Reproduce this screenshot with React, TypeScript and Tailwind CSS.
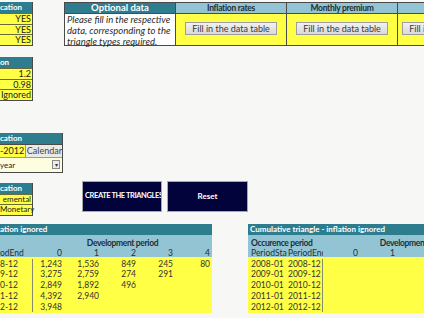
const font = { fontFamily: "Lato, 'Liberation Sans', sans-serif" };

function FillButton({ label }: { label: string }) {
  return (
    <div className="h-[13px] w-[92px] shrink-0 border border-[#9d9d9d] bg-gradient-to-b from-[#f1f1f1] to-[#d9d9d9] text-center text-[9px] leading-[11px] text-[#3a3a3a] whitespace-nowrap">
      {label}
    </div>
  );
}

function SmallBlock({
  title,
  rows,
  size = "text-[9px]",
}: {
  title: string;
  rows: string[];
  size?: string;
}) {
  return (
    <div className="w-[33px] shrink-0 border-r border-b border-[#4a4a4a]">
      <div className="h-[11px] bg-[#2e7d8f] text-[8px] font-bold leading-[11px] text-white whitespace-nowrap overflow-hidden">
        {title}
      </div>
      {rows.map((r) => (
        <div
          key={r}
          className={`h-[10.5px] border-t border-[#6b6b3a] bg-[#ffff45] ${size} leading-[9px] text-[#222] text-right whitespace-nowrap pr-[1px]`}
        >
          {r}
        </div>
      ))}
    </div>
  );
}

const leftRows = [
  { end: "8-12", v: ["1,243", "1,536", "849", "245", "80"] },
  { end: "9-12", v: ["3,275", "2,759", "274", "291", ""] },
  { end: "0-12", v: ["2,849", "1,892", "496", "", ""] },
  { end: "1-12", v: ["4,392", "2,940", "", "", ""] },
  { end: "2-12", v: ["3,948", "", "", "", ""] },
];

const rightRows = ["2008", "2009", "2010", "2011", "2012"];

export default function App() {
  return (
    <div
      className="h-[318px] w-[424px] overflow-hidden bg-[#f7f7f6] text-[#222]"
      style={font}
    >
      {/* top strip */}
      <div className="flex items-start pt-[2px]">
        <SmallBlock title="cation" rows={["YES", "YES", "YES"]} />

        <div className="ml-[31px] flex shrink-0">
          <div className="w-[112px] shrink-0 border border-[#4a4a4a] bg-white">
            <div className="h-[10px] bg-[#2e7d8f] text-center text-[9.5px] font-bold leading-[10px] text-white">
              Optional data
            </div>
            <div className="h-[32px] border-t border-[#4a4a4a] px-[2px] text-[9.5px] italic leading-[11px] text-[#2a2a2a]">
              <div className="whitespace-nowrap">Please fill in the respective</div>
              <div className="whitespace-nowrap">data, corresponding to the</div>
              <div className="whitespace-nowrap">triangle types required.</div>
            </div>
          </div>

          <div className="w-[111px] shrink-0 border-y border-r border-[#4a4a4a]">
            <div className="h-[10px] bg-[#92c4d4] text-center text-[8.5px] font-bold leading-[10px] tracking-[-0.3px] text-[#1d2f36]">
              Inflation rates
            </div>
            <div className="flex h-[32px] justify-center border-t border-[#4a4a4a] bg-[#ffff45] pt-[8px]">
              <FillButton label="Fill in the data table" />
            </div>
          </div>

          <div className="w-[111px] shrink-0 border-y border-r border-[#4a4a4a]">
            <div className="h-[10px] bg-[#92c4d4] text-center text-[8.5px] font-bold leading-[10px] tracking-[-0.3px] text-[#1d2f36]">
              Monthly premium
            </div>
            <div className="flex h-[32px] justify-center border-t border-[#4a4a4a] bg-[#ffff45] pt-[8px]">
              <FillButton label="Fill in the data table" />
            </div>
          </div>

          <div className="w-[40px] shrink-0 overflow-hidden border-y border-[#4a4a4a]">
            <div className="h-[10px] bg-[#92c4d4]" />
            <div className="flex h-[32px] border-t border-[#4a4a4a] bg-[#ffff45] pl-[4px] pt-[8px]">
              <FillButton label="Fill in the data table" />
            </div>
          </div>
        </div>
      </div>

      {/* second block */}
      <div className="mt-[11px]">
        <SmallBlock title="on" rows={["1.2", "0.98", "Ignored"]} />
      </div>

      {/* date block */}
      <div className="mt-[32px] w-[63px] border-r border-b border-[#4a4a4a]">
        <div className="h-[11px] bg-[#2e7d8f] text-[8px] font-bold leading-[11px] text-white">
          cation
        </div>
        <div className="flex h-[13px] border-t border-[#4a4a4a]">
          <div className="w-[27px] bg-[#ffff45] text-[9px] leading-[12px]">-2012</div>
          <div className="flex-1 border-l border-[#9a9a9a] bg-[#e9e9e6] pl-[1px] text-[9px] leading-[12px] text-[#444]">
            Calendar
          </div>
        </div>
        <div className="flex h-[15px] items-center justify-between border-t border-[#9a9a9a] bg-[#fdfde0] pr-[2px]">
          <span className="text-[8px] leading-[14px]">year</span>
          <div className="flex h-[9px] w-[8px] items-center justify-center border border-[#8a8a8a] bg-[#ececec] text-[6px] leading-none text-[#333]">
            ▾
          </div>
        </div>
      </div>

      {/* type block and buttons */}
      <div className="mt-[8px] flex items-start">
        <div className="mt-[2px]">
          <SmallBlock title="cation" rows={["emental", "Monetary"]} size="text-[8px]" />
        </div>
        <div className="ml-[49px] flex gap-[5px]">
          <div className="flex h-[31px] w-[80px] items-center overflow-hidden border border-[#a8a8a8] bg-[#03033b] pl-[2px] text-[7.5px] font-bold tracking-[-0.4px] whitespace-nowrap text-white">
            CREATE THE TRIANGLES
          </div>
          <div className="flex h-[31px] w-[81px] items-center justify-center border border-[#a8a8a8] bg-[#03033b] text-[8px] font-bold text-white">
            Reset
          </div>
        </div>
      </div>

      {/* triangles */}
      <div className="mt-[8px] flex items-start">
        <div className="w-[212px] shrink-0">
          <div className="h-[11px] bg-[#2e7d8f] text-[8px] font-bold leading-[11px] text-white">
            ation ignored
          </div>
          <div className="h-[22px] bg-[#92c4d4] pt-[3px] text-[8.5px] text-[#1d2f36]">
            <div className="flex h-[10px] leading-[10px]">
              <div className="w-[33px]" />
              <div className="flex-1 text-center font-bold tracking-[-0.35px]">Development period</div>
            </div>
            <div className="flex h-[9px] leading-[10px]">
              <div className="w-[33px]">odEnd</div>
              {["0", "1", "2", "3", "4"].map((c, i) => (
                <div
                  key={c}
                  className={`${i === 0 ? "w-[31px]" : "w-[37px]"} pr-[2px] text-right`}
                >
                  {c}
                </div>
              ))}
            </div>
          </div>
          <div className="bg-[#ffff45] pt-[2px] pb-[1px] text-[8.5px] leading-[10.8px] text-[#333]">
            {leftRows.map((r) => (
              <div key={r.end} className="flex h-[10.8px]">
                <div className="w-[33px] border-r border-[#8a8a6a]">{r.end}</div>
                {r.v.map((v, i) => (
                  <div
                    key={i}
                    className={`${i === 0 ? "w-[31px]" : "w-[37px]"} pr-[2px] text-right`}
                  >
                    {v}
                  </div>
                ))}
              </div>
            ))}
          </div>
        </div>

        <div className="ml-[36px] w-[176px] shrink-0 overflow-hidden">
          <div className="w-[300px]">
            <div className="h-[11px] bg-[#2e7d8f] pl-[2px] text-[8px] font-bold leading-[11px] text-white">
              Cumulative triangle - inflation ignored
            </div>
            <div className="h-[22px] bg-[#92c4d4] pt-[3px] text-[8.5px] text-[#1d2f36]">
              <div className="flex h-[10px] leading-[10px]">
                <div className="w-[75px] pl-[3px] font-bold tracking-[-0.35px] whitespace-nowrap">
                  Occurence period
                </div>
                <div className="w-[185px] text-center font-bold tracking-[-0.35px]">
                  Development period
                </div>
              </div>
              <div className="flex h-[9px] leading-[10px]">
                <div className="w-[39px] shrink-0 overflow-hidden whitespace-nowrap pl-[3px]">PeriodStart</div>
                <div className="w-[36px] shrink-0 overflow-hidden whitespace-nowrap pl-[1px]">PeriodEnd</div>
                {["0", "1", "2", "3", "4"].map((c) => (
                  <div key={c} className="w-[37px] shrink-0 pr-[2px] text-right">
                    {c}
                  </div>
                ))}
              </div>
            </div>
            <div className="bg-[#ffff45] pt-[2px] pb-[1px] text-[8.5px] leading-[10.8px] text-[#333]">
              {rightRows.map((y) => (
                <div key={y} className="flex h-[10.8px]">
                  <div className="w-[39px] pl-[3px]">{y}-01</div>
                  <div className="w-[36px] border-r border-[#8a8a6a] pl-[1px]">{y}-12</div>
                </div>
              ))}
            </div>
          </div>
        </div>
      </div>
    </div>
  );
}
